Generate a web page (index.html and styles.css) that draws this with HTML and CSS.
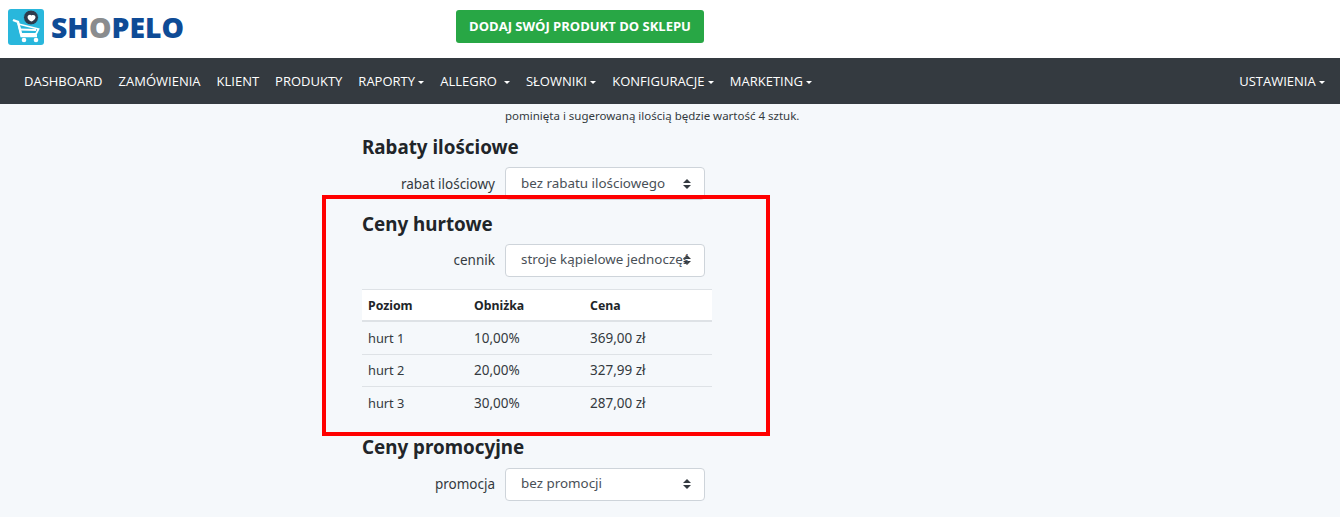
FILE: index.html
```html
<!DOCTYPE html>
<html lang="pl">
<head>
    <meta charset="UTF-8">
    <meta name="viewport" content="width=device-width, initial-scale=1.0">
    <title>Shopelo</title>
    <link rel="stylesheet" href="styles.css">
</head>
<body>
    <header class="topbar">
        <a href="#" class="logo">
            <svg class="logo-icon" width="36" height="36" viewBox="0 0 36 36">
                <rect width="36" height="36" rx="3" fill="#29b7dc"/>
                <path d="M5 11l5 2 3.500 14h15.500" fill="none" stroke="#fff" stroke-width="2.400"/>
                <path d="M10.500 15l20 5-2.500 5h-15z" fill="none" stroke="#fff" stroke-width="1.800"/>
                <path d="M12 20.500l16 .5" stroke="#fff" stroke-width="1.800"/>
                <circle cx="16" cy="31" r="2.300" fill="#fff"/>
                <circle cx="28" cy="31" r="2.300" fill="#fff"/>
                <circle cx="23" cy="8.500" r="7.500" fill="#2d3b4d" stroke="#29b7dc"/>
                <path d="M19.500 8c.5-2.500 3-3 4-1.500 1.500-1 4-.5 4 2-.5 2-2.500 3.500-4 4-1.500-.5-4-2-4-4.500z" fill="#fff"/>
            </svg>
            <span class="logo-text">SH<span class="logo-o">O</span>PELO</span>
        </a>
        <a href="#" class="add-btn">DODAJ SWÓJ PRODUKT DO SKLEPU</a>
    </header>

    <nav class="navbar">
        <a href="#" class="nav-link">DASHBOARD</a>
        <a href="#" class="nav-link">ZAMÓWIENIA</a>
        <a href="#" class="nav-link">KLIENT</a>
        <a href="#" class="nav-link">PRODUKTY</a>
        <a href="#" class="nav-link caret">RAPORTY</a>
        <a href="#" class="nav-link caret caret-wide">ALLEGRO</a>
        <a href="#" class="nav-link caret">SŁOWNIKI</a>
        <a href="#" class="nav-link caret">KONFIGURACJE</a>
        <a href="#" class="nav-link caret">MARKETING</a>
        <a href="#" class="nav-link caret nav-right">USTAWIENIA</a>
    </nav>

    <main class="content">
        <p class="hint">pominięta i sugerowaną ilością będzie wartość 4 sztuk.</p>

        <h2 class="section-title">Rabaty ilościowe</h2>
        <div class="form-row">
            <label class="form-label">rabat ilościowy</label>
            <select class="form-select">
                <option>bez rabatu ilościowego</option>
            </select>
        </div>

        <h2 class="section-title">Ceny hurtowe</h2>
        <div class="form-row">
            <label class="form-label">cennik</label>
            <select class="form-select">
                <option>stroje kąpielowe jednoczęściowe</option>
            </select>
        </div>

        <table class="price-table">
            <thead>
                <tr>
                    <th class="col-level">Poziom</th>
                    <th class="col-discount">Obniżka</th>
                    <th>Cena</th>
                </tr>
            </thead>
            <tbody>
                <tr><td>hurt 1</td><td>10,00%</td><td>369,00 zł</td></tr>
                <tr><td>hurt 2</td><td>20,00%</td><td>327,99 zł</td></tr>
                <tr><td>hurt 3</td><td>30,00%</td><td>287,00 zł</td></tr>
            </tbody>
        </table>

        <h2 class="section-title section-promo">Ceny promocyjne</h2>
        <div class="form-row">
            <label class="form-label">promocja</label>
            <select class="form-select">
                <option>bez promocji</option>
            </select>
        </div>

        <div class="highlight"></div>
    </main>
</body>
</html>
```

FILE: styles.css
```css
body {
    margin: 0;
    background-color: #f5f8fb;
    color: #212529;
    font-family: "Noto Sans", "Open Sans", sans-serif;
    font-size: 13px;
    height: 517px;
    overflow: hidden;
}

.topbar {
    display: flex;
    align-items: flex-start;
    height: 58px;
    background-color: #fff;
}

.logo {
    display: flex;
    align-items: center;
    width: 456px;
    padding: 9px 0 0 8px;
    box-sizing: border-box;
    text-decoration: none;
}

.logo-icon {
    flex: none;
}

.logo-text {
    margin-left: 7px;
    color: #0e4b96;
    font-family: "Open Sans", sans-serif;
    font-size: 28.300px;
    font-weight: 800;
    line-height: 36px;
}

.logo-o {
    color: #8a8c8e;
}

.add-btn {
    display: block;
    width: 248px;
    margin-top: 10px;
    padding: 9px 0;
    background-color: #28a745;
    border-radius: 3px;
    color: #fff;
    font-family: "Open Sans", sans-serif;
    font-size: 13px;
    font-weight: 700;
    line-height: 15px;
    text-align: center;
    text-decoration: none;
}

.navbar {
    display: flex;
    align-items: center;
    gap: 16px;
    height: 46px;
    padding: 0 15px 0 24px;
    background-color: #343a40;
}

.nav-link {
    color: #fff;
    font-family: "Open Sans", sans-serif;
    font-size: 13px;
    text-decoration: none;
    white-space: nowrap;
}

.caret::after {
    content: "";
    display: inline-block;
    margin-left: 3.300px;
    vertical-align: 2px;
    border-top: 3.500px solid #fff;
    border-left: 3.500px solid transparent;
    border-right: 3.500px solid transparent;
}

.caret-wide::after {
    margin-left: 7px;
}

.nav-right {
    margin-left: auto;
}

.content {
    position: relative;
    padding: 4px 0 0 362px;
}

.hint {
    margin: 0 0 0 143px;
    color: #343a40;
    font-size: 11.500px;
    line-height: 16px;
}

.section-title {
    margin: 11px 0 8px;
    font-size: 18.800px;
    font-weight: 700;
    line-height: 24px;
}

.form-row {
    display: flex;
    align-items: center;
    width: 343px;
    margin-bottom: 11.600px;
}

.form-label {
    width: 133px;
    color: #343a40;
    text-align: right;
    font-size: 13.500px;
}

.form-select {
    width: 200px;
    height: 33px;
    margin-left: 10px;
    padding: 0 16px 2px 15px;
    appearance: none;
    background: #fff url("data:image/svg+xml,%3Csvg xmlns='http://www.w3.org/2000/svg' width='8' height='10'%3E%3Cpath d='M0 4l4-4 4 4zM0 6l4 4 4-4z' fill='%23343a40'/%3E%3C/svg%3E") no-repeat right 13px center;
    border: 1px solid #ced4da;
    border-radius: 4px;
    color: #495057;
    font-family: inherit;
    font-size: 13.400px;
}

.price-table {
    width: 350px;
    margin-top: 12.500px;
    border-collapse: collapse;
    font-size: 13.500px;
}

.price-table th {
    height: 30px;
    padding: 0 6px;
    background-color: #fff;
    border-top: 1px solid #dee2e6;
    border-bottom: 2px solid #dee2e6;
    font-size: 12.300px;
    font-weight: 700;
    text-align: left;
}

.price-table td {
    height: 31.500px;
    padding: 0 6px;
    border-bottom: 1px solid #dee2e6;
    color: #343a40;
}

.price-table td:first-child {
    font-size: 12.800px;
}

.price-table tr:last-child td {
    border-bottom: none;
}

.col-level {
    width: 94px;
}

.col-discount {
    width: 104px;
}

.section-promo {
    margin: 16px 0 9px;
}

/* red frame drawn over the wholesale section */
.highlight {
    position: absolute;
    left: 322px;
    top: 91px;
    width: 440px;
    height: 233px;
    border: 4px solid #f00;
    pointer-events: none;
}
```
